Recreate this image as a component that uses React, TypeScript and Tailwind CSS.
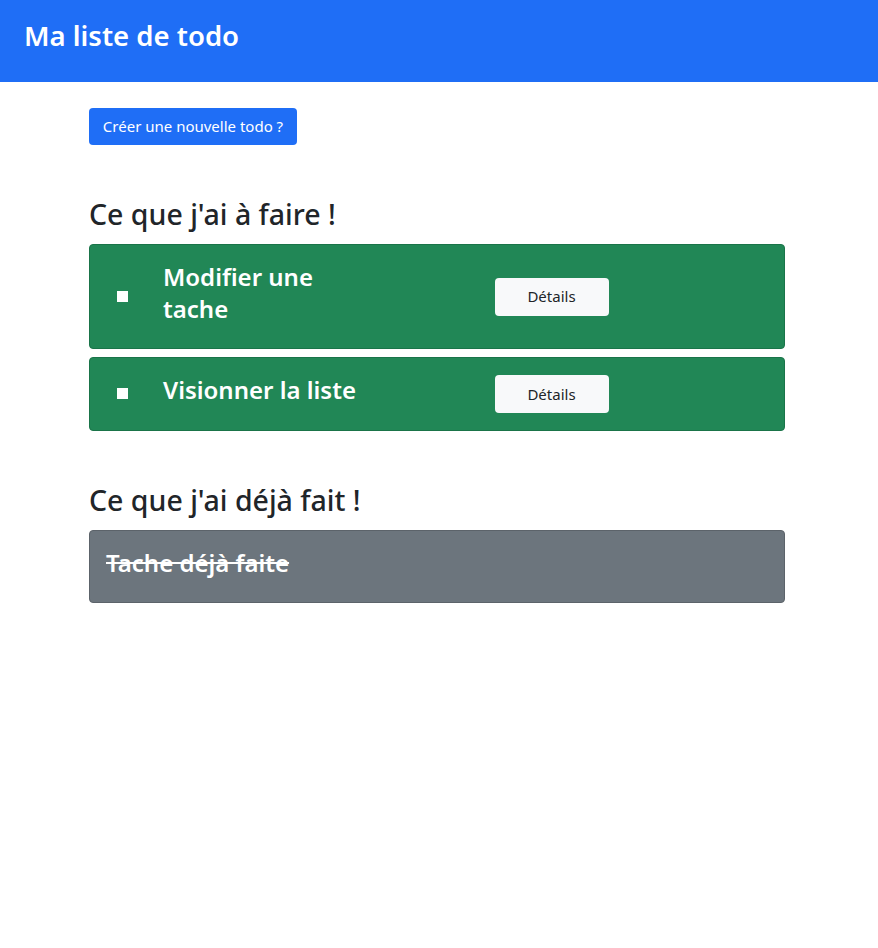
import React from "react";

const todos = [
  { id: 1, title: "Modifier une tache" },
  { id: 2, title: "Visionner la liste" },
];

const done = [{ id: 3, title: "Tache déjà faite" }];

export default function App() {
  return (
    <div className="min-h-[948px] bg-white text-[#212529] font-['Noto_Sans',sans-serif]">
      {/* Header */}
      <header className="h-[82px] bg-[#1f6ef6] px-6 pt-[19px]">
        <h1 className="text-[27.5px] font-semibold leading-[1.2] text-white">Ma liste de todo</h1>
      </header>

      <main className="ml-[89px] w-[696px] pt-[26px]">
        <button className="h-[37px] w-[208px] rounded-[4px] bg-[#1f6ef6] text-[15px] text-white">
          Créer une nouvelle todo ?
        </button>

        {/* A faire */}
        <h2 className="mt-[56px] mb-4 text-[28.5px] font-medium leading-[27px]">Ce que j'ai à faire !</h2>
        <div className="flex flex-col gap-2">
          {todos.map((t) => (
            <div
              key={t.id}
              className="rounded-[4px] border border-[#1a7449] bg-[#218756] p-4"
            >
              <div className="-mx-3 flex items-center">
                <div className="flex w-[57px] justify-center px-3">
                  <span className="block h-[11px] w-[11px] bg-white" />
                </div>
                <div className="w-[234px] px-3">
                  <h3 className="mb-2 text-[24px] font-semibold leading-[31.5px] text-white">{t.title}</h3>
                </div>
                <div className="flex w-[333px] justify-center px-3">
                  <button className="h-[38px] w-[114px] rounded-[4px] bg-[#f8f9fa] text-[15px] text-[#212529]">
                    Détails
                  </button>
                </div>
              </div>
            </div>
          ))}
        </div>

        {/* Deja fait */}
        <h2 className="mt-[56px] mb-4 text-[28.5px] font-medium leading-[27px]">Ce que j'ai déjà fait !</h2>
        {done.map((t) => (
          <div key={t.id} className="rounded-[4px] border border-[#5c636a] bg-[#6c757d] p-4">
            <h3 className="mb-2 text-[24px] font-semibold leading-[31.5px] text-white line-through">{t.title}</h3>
          </div>
        ))}
      </main>
    </div>
  );
}
